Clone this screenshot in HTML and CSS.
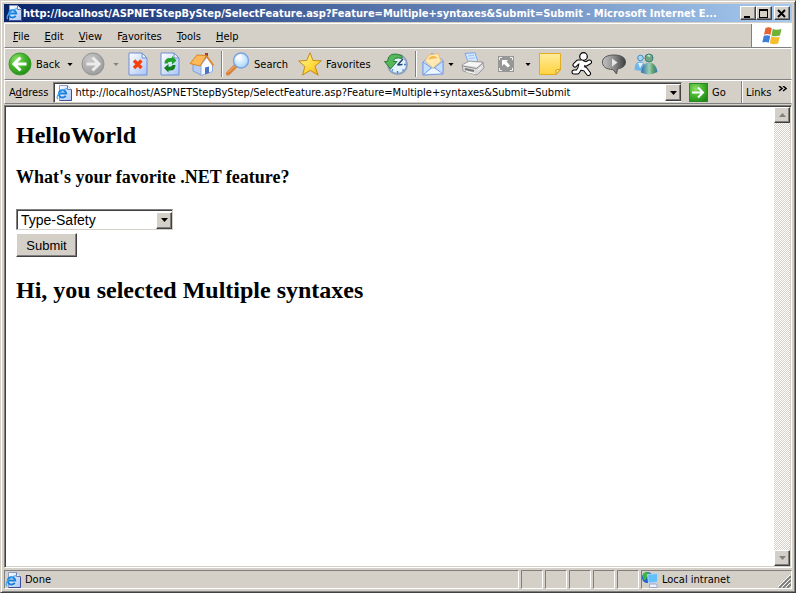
FILE: index.html
```
<!DOCTYPE html>
<html lang="en">
<head>
  <meta charset="UTF-8">
  <meta name="viewport" content="width=device-width, initial-scale=1.0">
  <title>http://localhost/ASPNETStepByStep/SelectFeature.asp</title>
  <link rel="stylesheet" href="styles.css">
</head>
<body>
  <!-- shared symbols and gradients -->
  <svg class="defs" width="0" height="0" aria-hidden="true">
    <defs>
      <linearGradient id="paper" x1="0" y1="0" x2="1" y2="1">
        <stop offset="0" stop-color="#fff"/><stop offset="1" stop-color="#a9c4f5"/>
      </linearGradient>
      <radialGradient id="green" cx=".35" cy=".3" r=".8">
        <stop offset="0" stop-color="#8ee06a"/><stop offset=".5" stop-color="#43b22c"/><stop offset="1" stop-color="#1f8414"/>
      </radialGradient>
      <radialGradient id="gray" cx=".35" cy=".3" r=".8">
        <stop offset="0" stop-color="#c8c8c8"/><stop offset="1" stop-color="#989898"/>
      </radialGradient>
      <radialGradient id="lens" cx=".4" cy=".35" r=".7">
        <stop offset="0" stop-color="#fff"/><stop offset="1" stop-color="#9fd4fa"/>
      </radialGradient>
      <linearGradient id="gold" x1="0" y1="0" x2="1" y2="1">
        <stop offset="0" stop-color="#fffba0"/><stop offset=".6" stop-color="#ffd83a"/><stop offset="1" stop-color="#f0a010"/>
      </linearGradient>
      <linearGradient id="note" x1="0" y1="0" x2="0" y2="1">
        <stop offset="0" stop-color="#ffed9c"/><stop offset="1" stop-color="#ffd23e"/>
      </linearGradient>
      <linearGradient id="bubble" x1="0" y1="0" x2="1" y2="0">
        <stop offset="0" stop-color="#c4c4c4"/><stop offset=".5" stop-color="#8c8c8c"/><stop offset="1" stop-color="#3c3c3c"/>
      </linearGradient>
      <linearGradient id="buddy" x1="0" y1="0" x2="1" y2="0">
        <stop offset="0" stop-color="#2a6fb0"/><stop offset=".5" stop-color="#9fceb0"/><stop offset=".75" stop-color="#5b9c66"/><stop offset="1" stop-color="#2c78c4"/>
      </linearGradient>
      <symbol id="ie" viewBox="0 0 16 16">
        <path d="M3.500.5h8l4 4v11h-12z" fill="url(#paper)" stroke="#8c9cc8"/>
        <path d="M15.500 4.500v11h-12" fill="none" stroke="#3d4f9c"/>
        <path d="M11.500.5v4h4" fill="#eef3fd" stroke="#6a7ab4"/>
        <path d="M9.700 10.800A3.700 3.700 0 1 1 10.200 8.500H4" fill="none" stroke="#1a80da" stroke-width="2"/>
        <path d="M2 14C-1 12 4 5 11.500 3.500" fill="none" stroke="#43a9f2" stroke-width="1.200"/>
      </symbol>
      <symbol id="down" viewBox="0 0 7 4">
        <path d="M0 0h7L3.500 4z" fill="currentColor"/>
      </symbol>
    </defs>
  </svg>

  <div class="window">
    <header class="titlebar">
      <svg class="icon-16"><use href="#ie"/></svg>
      <span class="caption">http://localhost/ASPNETStepByStep/SelectFeature.asp?Feature=Multiple+syntaxes&amp;Submit=Submit - Microsoft Internet E...</span>
      <div class="window-buttons">
        <button class="raised" aria-label="Minimize"><svg width="10" height="9"><path d="M1 7h6v2H1z"/></svg></button>
        <button class="raised" aria-label="Maximize"><svg width="10" height="9"><path d="M0 0h9v9H0zM1 2v6h7V2z" fill-rule="evenodd"/></svg></button>
        <button class="raised close" aria-label="Close"><svg width="10" height="9"><path d="M1 1l7 7M8 1L1 8" stroke="#000" stroke-width="2"/></svg></button>
      </div>
    </header>

    <div class="menu-row">
      <nav class="menu">
        <button><u>F</u>ile</button>
        <button><u>E</u>dit</button>
        <button><u>V</u>iew</button>
        <button>F<u>a</u>vorites</button>
        <button><u>T</u>ools</button>
        <button><u>H</u>elp</button>
      </nav>
      <div class="brand">
        <svg width="20" height="18" viewBox="0 0 20 18">
          <path d="M3.500 1Q7-.5 9.800 1.300L8.400 8Q5.500 6.300 2 7.800z" fill="#e8622f"/>
          <path d="M10.800 1.800Q14 3.500 19.500 2L18 8.600Q13 10 9.500 8.400z" fill="#6fb238"/>
          <path d="M1.800 8.800Q5.400 7.400 8.200 9L6.800 15.800Q4 14.200.3 15.500z" fill="#3f7ddb"/>
          <path d="M9.200 9.500Q13 11 17.700 9.700L16.200 16.500Q12 18 7.800 16.300z" fill="#f6bd2c"/>
        </svg>
      </div>
    </div>

    <div class="toolbar">
      <button class="tool back">
        <svg width="24" height="24" viewBox="0 0 24 24">
          <circle cx="12" cy="12" r="11" fill="url(#green)" stroke="#3b9a2d"/>
          <path d="M12.500 5.500L6 12l6.500 6.500M7 12h11.500" fill="none" stroke="#fff" stroke-width="3"/>
        </svg>
        <span>Back</span>
      </button>
      <button class="drop" aria-label="Back history"><svg class="arrow small"><use href="#down"/></svg></button>
      <button class="tool forward" aria-label="Forward">
        <svg width="24" height="24" viewBox="0 0 24 24">
          <circle cx="12" cy="12" r="11" fill="url(#gray)" stroke="#949494"/>
          <path d="M11.500 5.500L18 12l-6.500 6.500M17 12H5.500" fill="none" stroke="#ececec" stroke-width="3"/>
        </svg>
      </button>
      <button class="drop off" aria-label="Forward history"><svg class="arrow small"><use href="#down"/></svg></button>
      <button class="tool" aria-label="Stop">
        <svg width="20" height="24" viewBox="0 0 20 24">
          <path d="M1 1h13l5 5v17H1z" fill="url(#paper)" stroke="#6d8fd6"/>
          <path d="M14 1v5h5z" fill="#e6efff" stroke="#6d8fd6"/>
          <path d="M6 8.500l7.500 7.500M13.500 8.500L6 16" stroke="#f4400f" stroke-width="3.400"/>
        </svg>
      </button>
      <button class="tool" aria-label="Refresh">
        <svg width="20" height="24" viewBox="0 0 20 24">
          <path d="M1 1h13l5 5v17H1z" fill="url(#paper)" stroke="#6d8fd6"/>
          <path d="M14 1v5h5z" fill="#e6efff" stroke="#6d8fd6"/>
          <path d="M4.500 11.500Q4.500 6 10 6h2V4l4.500 4.500L12 12.500V9.800h-2q-2 0-2.500 1.700z" fill="#1fa02a"/>
          <path d="M15.500 13q0 5.500-5.500 5.500H8.500v2L4 16l4.500-4v2.700H10q2 0 2.500-1.700z" fill="#11801c"/>
        </svg>
      </button>
      <button class="tool" aria-label="Home">
        <svg width="26" height="24" viewBox="0 0 26 24">
          <path d="M16 1h3v8l-3-3z" fill="#a8382c"/>
          <path d="M4 12v7l9 4.500V12L8 9z" fill="#b4cdf6" stroke="#7e9ed6"/>
          <path d="M12 13l6-8 5.500 8v6.500L12 23.500z" fill="#f8fbff" stroke="#8eaade"/>
          <path d="M1 11.500L8 3l9.500.5L11 14z" fill="#fcb95a" stroke="#d88424"/>
          <path d="M17.500 4l7 9.500" stroke="#dd8a30" stroke-width="2"/>
          <path d="M16 15.500l4-1v6.500l-4 1.500z" fill="#4c74c4"/>
        </svg>
      </button>
      <span class="separator"></span>
      <button class="tool search">
        <svg width="24" height="24" viewBox="0 0 24 24">
          <path d="M9.500 14L2 21.500" stroke="#d8813a" stroke-width="4" stroke-linecap="round"/>
          <path d="M9 13.500L2 20.500" stroke="#f8bb78"/>
          <circle cx="15" cy="8.500" r="7.500" fill="url(#lens)" stroke="#7ba3e0" stroke-width="1.500"/>
          <path d="M10.500 7.500q1-3.500 4.500-4" fill="none" stroke="#fff" stroke-width="2"/>
        </svg>
        <span>Search</span>
      </button>
      <button class="tool favorites">
        <svg width="24" height="24" viewBox="0 0 24 24">
          <path d="M12 .8l3 7.700 8.300.3-6.300 5.500 3.200 8.900-8-4.800L4.600 23l2.300-8.600L.7 9l8-.5z" fill="url(#gold)" stroke="#c48a1a"/>
        </svg>
        <span>Favorites</span>
      </button>
      <button class="tool" aria-label="History">
        <svg width="24" height="24" viewBox="0 0 24 24">
          <circle cx="13.500" cy="12.500" r="9.500" fill="#e2f2ff" stroke="#8fa2bd" stroke-width="2"/>
          <path d="M13.500 19v2M18.500 17.500l1 1M20 12.500h2M9 17.500l-1 1" stroke="#3f7fd8" stroke-width="1.500"/>
          <path d="M18 3.500Q4-1.500 3.500 9.500H.5L6.500 17l6.500-7.500H9.500Q10 4.500 18 6.500z" fill="#56b75c" stroke="#2a7e38"/>
          <path d="M19 7l-5.500 6M18.500 12.500l-5 .5" fill="none" stroke="#27466f" stroke-width="1.500"/>
        </svg>
      </button>
      <span class="separator"></span>
      <button class="tool mail" aria-label="Mail">
        <svg width="24" height="24" viewBox="0 0 24 24">
          <path d="M2 10L11 1l11 7v13L2 23z" fill="#c2dbfb" stroke="#86a6e4"/>
          <path d="M4 9L8 3l9-1.500L20 9l-8 7z" fill="#ffe9b4" stroke="#e9c07a"/>
          <path d="M7 7.500Q11 1.500 17 6z" fill="#f7b84a"/>
          <path d="M2 10l10 7 10-8v13L2 23z" fill="#c5e0ff" stroke="#7b9be0"/>
          <path d="M2 23l8-7M22 22l-8-6" stroke="#7b9be0"/>
          <path d="M4 22l8-6 8 5z" fill="#eef7ff"/>
        </svg>
      </button>
      <button class="drop mail-drop" aria-label="Mail options"><svg class="arrow small"><use href="#down"/></svg></button>
      <button class="tool print" aria-label="Print">
        <svg width="24" height="24" viewBox="0 0 24 24">
          <path d="M4 1.500L14 .8l3 9.200-9 2z" fill="#d4e8ff" stroke="#7aa6ea"/>
          <path d="M7 4l6-.7M8 6.500l6-.7" stroke="#9fc0ee"/>
          <path d="M1 13l7-4 14 1 1 6-7 7-14-4z" fill="#d9d9d9" stroke="#9c9c9c"/>
          <path d="M2 13l6-3 13 1-5 4z" fill="#f6f6f6"/>
          <path d="M1.500 14l14 2.500L22 11" fill="none" stroke="#8c8c8c"/>
          <path d="M4 17l9 2" stroke="#777" stroke-width="2"/>
          <path d="M5 19.500l9 2" stroke="#fff"/>
          <path d="M17 18.500l4-4" stroke="#fff"/>
        </svg>
      </button>
      <button class="tool" aria-label="Full screen">
        <svg width="16" height="16" viewBox="0 0 16 16">
          <path d="M0 0h16v16H0z" fill="#979797"/>
          <path d="M1.500 4V1.500H4M12 1.500h2.500V4M14.500 12v2.500H12M4 14.500H1.500V12" fill="none" stroke="#f4f4f4"/>
          <path d="M4 4h6L8.500 5.500 12 9.500 10 11.500 6 8l-2 2z" fill="#fff"/>
        </svg>
      </button>
      <button class="drop" aria-label="Size options"><svg class="arrow small"><use href="#down"/></svg></button>
      <button class="tool" aria-label="Note">
        <svg width="22" height="22" viewBox="0 0 22 22">
          <path d="M.5.5h21V17L17 21.500H.5z" fill="url(#note)" stroke="#e2ad24"/>
          <path d="M21.500 16L17 17v4.500z" fill="#fff1ad" stroke="#d89b18"/>
        </svg>
      </button>
      <button class="tool" aria-label="Messenger">
        <svg width="22" height="24" viewBox="0 0 22 24">
          <!-- black outline first, white body over it -->
          <g fill="none" stroke="#000" stroke-width="5" stroke-linecap="round" stroke-linejoin="round">
            <path d="M11 10l-2 6 5 1 3.500 4.500M9 16l-2.500 4H3M10.500 10H7L4 13M11 10.500l4 1.500 3.500-2"/>
          </g>
          <circle cx="12.500" cy="4.500" r="3.800" fill="#fff" stroke="#000" stroke-width="1.200"/>
          <g fill="none" stroke="#fff" stroke-width="3" stroke-linecap="round" stroke-linejoin="round">
            <path d="M11 10l-2 6 5 1 3.500 4.500M9 16l-2.500 4H3M10.500 10H7L4 13M11 10.500l4 1.500 3.500-2"/>
          </g>
          <path d="M11.500 10l-1.500 6" stroke="#fff" stroke-width="5"/>
        </svg>
      </button>
      <button class="tool" aria-label="Discuss">
        <svg width="24" height="22" viewBox="0 0 24 22">
          <path d="M12 2c7 0 11.500 2.500 11.500 7 0 4-3 6-8 7l-1 5-3.500-4.500C4 16.500.5 13.500.5 9c0-4.500 4.500-7 11.500-7z" fill="url(#bubble)" stroke="#555"/>
          <path d="M10 5.500l5.500 4-5.500 4z" fill="#e6e6e6"/>
        </svg>
      </button>
      <button class="tool" aria-label="Buddies">
        <svg width="24" height="22" viewBox="0 0 24 22">
          <path d="M.5 17q0-8.500 5.500-8.500T12 17l-5 1z" fill="#6fb6ea"/>
          <path d="M4 10l2 5 3-5z" fill="#e6f4ff"/>
          <circle cx="6.500" cy="5" r="2.800" fill="#a5d6f2" stroke="#3f8cc4"/>
          <path d="M7 19.500Q8 9.500 15 9.500t8.500 9.500q-8 4.500-16.500.5z" fill="url(#buddy)"/>
          <circle cx="15" cy="5" r="4" fill="#6fa880" stroke="#357e80"/>
          <path d="M13.500 3q1.500-1 2.500.5" fill="none" stroke="#c9e6cf" stroke-width="1.500"/>
        </svg>
      </button>
    </div>

    <form class="address-row">
      <label for="address">A<u>d</u>dress</label>
      <div class="combo address-combo">
        <svg class="icon-16"><use href="#ie"/></svg>
        <input type="text" id="address" value="http://localhost/ASPNETStepByStep/SelectFeature.asp?Feature=Multiple+syntaxes&amp;Submit=Submit">
        <button type="button" class="raised combo-button" aria-label="Show addresses"><svg class="arrow"><use href="#down"/></svg></button>
      </div>
      <button type="button" class="go">
        <svg width="19" height="19" viewBox="0 0 19 19">
          <path d="M0 0h19v19H0z" fill="url(#green)"/>
          <path d="M.5.5h18v18H.5z" fill="none" stroke="#278a26"/>
          <path d="M9 4.500l5 5-5 5M14 9.500H3" fill="none" stroke="#fff" stroke-width="2"/>
        </svg>
        <span>Go</span>
      </button>
      <button type="button" class="links">
        <span>Links</span>
        <svg width="9" height="6"><path d="M1 0l3 2.500L1 5M5 0l3 2.500L5 5" fill="none" stroke="#000" stroke-width="1.500"/></svg>
      </button>
    </form>

    <div class="viewport">
      <main class="page">
        <h2>HelloWorld</h2>
        <form>
          <h3><label for="feature">What's your favorite .NET feature?</label></h3>
          <div class="combo feature-combo">
            <select id="feature">
              <option>Type-Safety</option>
              <option>Multiple syntaxes</option>
            </select>
            <span class="raised combo-button"><svg class="arrow"><use href="#down"/></svg></span>
          </div>
          <button type="button" class="submit">Submit</button>
        </form>
        <h2>Hi, you selected Multiple syntaxes</h2>
      </main>
      <div class="scrollbar">
        <button class="raised" aria-label="Scroll up"><svg class="arrow flip"><use href="#down"/></svg></button>
        <button class="raised" aria-label="Scroll down"><svg class="arrow"><use href="#down"/></svg></button>
      </div>
    </div>

    <footer class="statusbar">
      <div class="pane message"><svg class="icon-16"><use href="#ie"/></svg><span>Done</span></div>
      <div class="pane"></div>
      <div class="pane"></div>
      <div class="pane"></div>
      <div class="pane"></div>
      <div class="pane"></div>
      <div class="pane zone">
        <svg class="icon-16" viewBox="0 0 16 16">
          <circle cx="5.500" cy="5.500" r="5.500" fill="#1f5cd6"/>
          <path d="M1 2q3-3 6-1L5 5 3 9Q0 7 1 2z" fill="#3cb83a"/>
          <path d="M5.500 2.500l10-1v8.500l-9 1z" fill="#62c0fa" stroke="#b4d4fa"/>
          <path d="M7.500 12h7l1 3.500h-8z" fill="#eef1fa" stroke="#9ca8cc"/>
        </svg>
        <span>Local intranet</span>
        <svg class="grip" width="13" height="13">
          <path d="M1 13L13 1M5 13l8-8M9 13l4-4" stroke="#808080" stroke-width="2"/>
          <path d="M0 12L12 0M4 12l8-8M8 12l4-4" stroke="#fff"/>
        </svg>
      </div>
    </footer>
  </div>
</body>
</html>
```
FILE: styles.css
```
* {
  box-sizing: border-box;
}
body {
  margin: 0;
  background: #d4d0c8;
  color: #000;
  font-family: Tahoma, "DejaVu Sans Condensed", sans-serif;
  font-size: 11px;
}
button {
  margin: 0;
  padding: 0;
  border: none;
  background: none;
  color: inherit;
  font: inherit;
}
svg {
  display: block;
  flex: none;
}
.defs {
  position: absolute;
}
.icon-16 {
  width: 16px;
  height: 16px;
}
.arrow {
  width: 7px;
  height: 4px;
}
.arrow.small {
  width: 6px;
  height: 3px;
}
.flip {
  transform: rotate(180deg);
}
.window {
  display: flex;
  flex-direction: column;
  min-height: 100vh;
  padding: 3px;
  border: 1px solid;
  border-color: #d4d0c8 #404040 #404040 #d4d0c8;
  box-shadow: inset 1px 1px #fff, inset -1px -1px #808080;
}
.raised {
  display: flex;
  align-items: center;
  justify-content: center;
  background: #d4d0c8;
  border: 1px solid;
  border-color: #fff #404040 #404040 #fff;
  box-shadow: inset -1px -1px #808080;
}

/* title bar */
.titlebar {
  display: flex;
  align-items: center;
  height: 18px;
  padding: 0 2px;
  background: linear-gradient(to right, #0a246a, #a6caf0);
  color: #fff;
  font-weight: bold;
}
.caption {
  flex: 1;
  min-width: 0;
  padding-left: 1px;
  overflow: hidden;
  white-space: nowrap;
}
.window-buttons {
  display: flex;
}
.window-buttons .raised {
  width: 16px;
  height: 14px;
}
.window-buttons .close {
  margin-left: 2px;
}

/* bars */
.menu-row,
.toolbar,
.address-row {
  display: flex;
  align-items: center;
  border: 1px solid;
  border-color: #fff #fff #808080 #fff;
}
.menu-row {
  height: 25px;
  margin-top: 1px;
  align-items: stretch;
}
.menu {
  display: flex;
  flex: 1;
  gap: 15px;
  padding: 2px 0 0 8px;
}
.brand {
  display: flex;
  align-items: center;
  justify-content: center;
  width: 40px;
  background: #fff;
  border-left: 1px solid #808080;
}
.toolbar {
  height: 32px;
  padding-left: 3px;
}
.tool {
  display: flex;
  align-items: center;
  justify-content: center;
  flex: none;
  width: 32px;
  height: 28px;
}
.tool span {
  margin-left: 4px;
}
.back,
.search,
.favorites {
  justify-content: flex-start;
}
.back {
  width: 56px;
}
.forward,
.print {
  width: 34px;
}
.search {
  width: 72px;
}
.favorites {
  width: 82px;
}
.mail {
  width: 26px;
}
.drop {
  display: flex;
  justify-content: center;
  width: 12px;
}
.mail-drop {
  width: 10px;
}
.off {
  color: #808080;
}
.separator {
  width: 2px;
  height: 26px;
  margin: 0 3px;
  border-left: 1px solid #808080;
  border-right: 1px solid #fff;
}
.address-row {
  height: 24px;
  padding-left: 4px;
}
.combo {
  display: flex;
  align-items: center;
  background: #fff;
  border: 1px solid;
  border-color: #808080 #d4d0c8 #d4d0c8 #808080;
  box-shadow: inset 1px 1px #404040;
}
.combo-button {
  flex: none;
  width: 16px;
  height: 17px;
}
.address-combo {
  flex: 1;
  height: 21px;
  margin: 0 7px 0 5px;
  padding: 1px 0 0 2px;
}
.address-combo input {
  flex: 1;
  min-width: 0;
  padding: 0 0 0 3px;
  border: none;
  outline: none;
  background: none;
  color: #000;
  font: inherit;
}
.go {
  display: flex;
  align-items: center;
  gap: 4px;
  width: 52px;
}
.links {
  display: flex;
  align-items: center;
  justify-content: space-between;
  width: 50px;
  height: 22px;
  padding: 0 4px;
  border-left: 1px solid #808080;
  box-shadow: inset 1px 0 #fff;
}
.links svg {
  margin-bottom: 6px;
}

/* document */
.viewport {
  display: flex;
  flex: 1;
  margin-top: 1px;
  background: #fff;
  border: 1px solid;
  border-color: #808080 #fff #fff #808080;
  box-shadow: inset 1px 1px #404040, inset -1px -1px #d4d0c8;
}
.page {
  flex: 1;
  padding: 15px 11px;
  font-family: "Liberation Serif", serif;
}
.page h2,
.page h3 {
  margin: 0;
}
.page h2 {
  font-size: 24px;
  line-height: 28px;
}
.page h3 {
  margin: 17px 0 21px;
  font-size: 18px;
  line-height: 22px;
}
.feature-combo {
  width: 157px;
  height: 21px;
  padding-top: 1px;
}
.feature-combo select {
  flex: 1;
  min-width: 0;
  height: 18px;
  padding: 0 0 0 4px;
  appearance: none;
  border: none;
  outline: none;
  background: none;
  color: #000;
  font: 14px "Liberation Sans", sans-serif;
}
.submit {
  width: 61px;
  height: 24px;
  margin: 3px 0 19px;
  background: #d4d0c8;
  border: 1px solid;
  border-color: #fff #404040 #404040 #fff;
  box-shadow: inset -1px -1px #808080;
  font: 13px "Liberation Sans", sans-serif;
}
.scrollbar {
  display: flex;
  flex-direction: column;
  justify-content: space-between;
  width: 16px;
  margin: 1px 1px 1px 0;
  background: repeating-conic-gradient(#fff 0 25%, #d4d0c8 0 50%) 0 0 / 2px 2px;
}
.scrollbar .raised {
  width: 100%;
  height: 16px;
  color: #808080;
}

/* status bar */
.statusbar {
  display: flex;
  gap: 2px;
  height: 19px;
  margin-top: 2px;
}
.pane {
  display: flex;
  align-items: center;
  width: 22px;
  border: 1px solid;
  border-color: #808080 #fff #fff #808080;
}
.message {
  flex: 1;
}
.message span {
  margin-left: 4px;
}
.zone {
  width: 151px;
}
.zone span {
  margin-left: 4px;
}
.grip {
  align-self: flex-end;
  margin-left: auto;
}
```
